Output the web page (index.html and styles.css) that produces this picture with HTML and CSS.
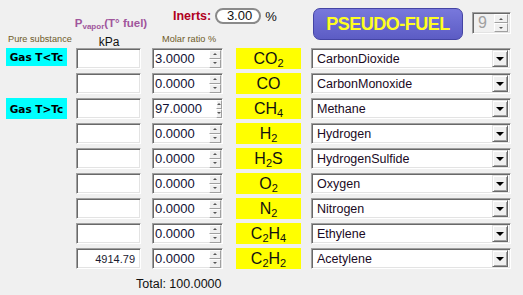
FILE: index.html
```html
<!DOCTYPE html>
<html>
<head>
<meta charset="utf-8">
<link rel="stylesheet" href="styles.css">
</head>
<body>
<div class="app">
  <div class="header">
    <div class="h-pure">Pure substance</div>
    <div class="h-pvap">
      <div class="pvap-title">P<span class="sub-v">vapor</span>(T° fuel)</div>
      <div class="kpa">kPa</div>
    </div>
    <div class="h-molar">
      <div class="inerts">
        <span class="inerts-label">Inerts:</span>
        <span class="pill">3.00</span>
        <span class="pct">%</span>
      </div>
      <div class="molar-label">Molar ratio %</div>
    </div>
    <div class="h-right">
      <div class="pseudo">PSEUDO-FUEL</div>
      <div class="spin9">
        <span class="spin9-val">9</span>
        <span class="spinner big"><span class="sb up"><i></i></span><span class="sb down"><i></i></span></span>
      </div>
    </div>
  </div>

  <div class="grid">
    <div class="lbl"><span class="cyan">Gas T&lt;Tc</span></div>
    <div class="box pv"></div>
    <div class="box molar"><span class="val">3.0000</span><span class="spinner"><span class="sb up"><i></i></span><span class="sb down"><i></i></span></span></div>
    <div class="formula">CO<sub>2</sub></div>
    <div class="box select"><span class="opt">CarbonDioxide</span><span class="dd"><i></i></span></div>

    <div class="lbl"></div>
    <div class="box pv"></div>
    <div class="box molar"><span class="val">0.0000</span><span class="spinner"><span class="sb up"><i></i></span><span class="sb down"><i></i></span></span></div>
    <div class="formula">CO</div>
    <div class="box select"><span class="opt">CarbonMonoxide</span><span class="dd"><i></i></span></div>

    <div class="lbl"><span class="cyan tall">Gas T&gt;Tc</span></div>
    <div class="box pv"></div>
    <div class="box molar"><span class="val">97.0000</span><span class="spinner"><span class="sb up"><i></i></span><span class="sb down"><i></i></span></span></div>
    <div class="formula">CH<sub>4</sub></div>
    <div class="box select"><span class="opt">Methane</span><span class="dd"><i></i></span></div>

    <div class="lbl"></div>
    <div class="box pv"></div>
    <div class="box molar"><span class="val">0.0000</span><span class="spinner"><span class="sb up"><i></i></span><span class="sb down"><i></i></span></span></div>
    <div class="formula">H<sub>2</sub></div>
    <div class="box select"><span class="opt">Hydrogen</span><span class="dd"><i></i></span></div>

    <div class="lbl"></div>
    <div class="box pv"></div>
    <div class="box molar"><span class="val">0.0000</span><span class="spinner"><span class="sb up"><i></i></span><span class="sb down"><i></i></span></span></div>
    <div class="formula">H<sub>2</sub>S</div>
    <div class="box select"><span class="opt">HydrogenSulfide</span><span class="dd"><i></i></span></div>

    <div class="lbl"></div>
    <div class="box pv"></div>
    <div class="box molar"><span class="val">0.0000</span><span class="spinner"><span class="sb up"><i></i></span><span class="sb down"><i></i></span></span></div>
    <div class="formula">O<sub>2</sub></div>
    <div class="box select"><span class="opt">Oxygen</span><span class="dd"><i></i></span></div>

    <div class="lbl"></div>
    <div class="box pv"></div>
    <div class="box molar"><span class="val">0.0000</span><span class="spinner"><span class="sb up"><i></i></span><span class="sb down"><i></i></span></span></div>
    <div class="formula">N<sub>2</sub></div>
    <div class="box select"><span class="opt">Nitrogen</span><span class="dd"><i></i></span></div>

    <div class="lbl"></div>
    <div class="box pv"></div>
    <div class="box molar"><span class="val">0.0000</span><span class="spinner"><span class="sb up"><i></i></span><span class="sb down"><i></i></span></span></div>
    <div class="formula">C<sub>2</sub>H<sub>4</sub></div>
    <div class="box select"><span class="opt">Ethylene</span><span class="dd"><i></i></span></div>

    <div class="lbl"></div>
    <div class="box pv"><span class="pvval">4914.79</span></div>
    <div class="box molar"><span class="val">0.0000</span><span class="spinner"><span class="sb up"><i></i></span><span class="sb down"><i></i></span></span></div>
    <div class="formula">C<sub>2</sub>H<sub>2</sub></div>
    <div class="box select"><span class="opt">Acetylene</span><span class="dd"><i></i></span></div>
  </div>

  <div class="total">Total: 100.0000</div>
</div>
</body>
</html>
```
FILE: styles.css
```css
html, body {
  margin: 0;
  padding: 0;
  background: #f0f0f0;
}
body {
  font-family: "Liberation Sans", Arial, sans-serif;
  color: #111;
  width: 523px;
  height: 295px;
  overflow: hidden;
}
.app {
  padding-left: 6px;
}

/* ---------- header ---------- */
.header {
  display: flex;
  height: 48px;
}
.h-pure {
  width: 70px;
  display: flex;
  flex-direction: column;
  justify-content: flex-end;
  padding-left: 2px;
  padding-bottom: 3px;
  box-sizing: border-box;
  font-size: 9.2px;
  line-height: 12px;
  color: #6e5a28;
  white-space: nowrap;
}
.h-pvap {
  width: 76px;
  display: flex;
  flex-direction: column;
  align-items: center;
  padding-top: 16px;
  box-sizing: border-box;
}
.pvap-title {
  font-size: 11.5px;
  font-weight: bold;
  line-height: 14px;
  color: #a0569c;
  white-space: nowrap;
  margin-right: 6px;
}
.sub-v {
  font-size: 8px;
  position: relative;
  top: 2px;
}
.kpa {
  font-size: 12px;
  line-height: 14px;
  margin-top: 3px;
  color: #111;
  margin-right: 10px;
}
.h-molar {
  width: 159px;
  display: flex;
  flex-direction: column;
  padding-top: 8px;
  box-sizing: border-box;
}
.inerts {
  display: flex;
  align-items: center;
  height: 16px;
  margin-left: 21px;
}
.inerts-label {
  font-size: 12.5px;
  font-weight: bold;
  color: #b0001e;
  margin-right: 4px;
}
.pill {
  width: 46px;
  height: 16px;
  box-sizing: border-box;
  border: 2px solid #8a8a8a;
  border-radius: 8px;
  background: #fff;
  font-size: 13px;
  line-height: 12px;
  text-align: right;
  padding-right: 7px;
  color: #111;
}
.pct {
  font-size: 13px;
  margin-left: 4px;
  color: #111;
}
.molar-label {
  margin-top: auto;
  margin-left: 10px;
  padding-bottom: 3px;
  font-size: 9.2px;
  line-height: 12px;
  color: #6e5a28;
  white-space: nowrap;
}
.h-right {
  display: flex;
  align-items: flex-start;
  padding-top: 8px;
  margin-left: 2px;
}
.pseudo {
  width: 150px;
  height: 32px;
  box-sizing: border-box;
  border: 1px solid #4444a4;
  border-radius: 7px;
  background: linear-gradient(#7878dc, #5c5cc4);
  color: #ffff20;
  font-weight: bold;
  font-size: 18px;
  letter-spacing: -0.5px;
  display: flex;
  align-items: center;
  justify-content: center;
}
.spin9 {
  margin-left: 9px;
  margin-top: 4px;
  width: 39px;
  height: 22px;
  box-sizing: border-box;
  border-top: 1px solid #a0a0a0;
  border-left: 1px solid #a0a0a0;
  border-right: 1px solid #fff;
  border-bottom: 1px solid #fff;
  box-shadow: inset 1px 1px 0 #696969, inset -1px -1px 0 #e3e3e3;
  background: #f0f0f0;
  display: flex;
  align-items: center;
  padding: 2px 2px 2px 5px;
}
.spin9-val {
  font-size: 16px;
  color: #a0a0a0;
  flex: 1;
}
.spinner {
  display: flex;
  flex-direction: column;
  width: 14px;
  height: 17px;
}
.spinner.big {
  height: 18px;
}
.sb {
  flex: 1;
  box-sizing: border-box;
  background: #f0f0f0;
  border-top: 1px solid #fff;
  border-left: 1px solid #fff;
  border-right: 1px solid #a0a0a0;
  border-bottom: 1px solid #a0a0a0;
  display: flex;
  align-items: center;
  justify-content: center;
}
.sb i {
  width: 0;
  height: 0;
  border-left: 2px solid transparent;
  border-right: 2px solid transparent;
}
.sb.up i {
  border-bottom: 2px solid #555;
}
.sb.down i {
  border-top: 2px solid #555;
}

/* ---------- grid ---------- */
.grid {
  display: grid;
  grid-template-columns: 70px 76px 84px 75px 200px;
  grid-auto-rows: 21px;
  row-gap: 4px;
}
.lbl {
  display: flex;
  align-items: flex-start;
}
.cyan {
  width: 61px;
  height: 18px;
  background: #00ffff;
  color: #000;
  font-family: "DejaVu Sans", sans-serif;
  font-weight: bold;
  font-size: 10.5px;
  display: flex;
  align-items: center;
  justify-content: center;
}
.cyan.tall {
  height: 21px;
}
.box {
  height: 21px;
  box-sizing: border-box;
  border-top: 1px solid #a0a0a0;
  border-left: 1px solid #a0a0a0;
  border-right: 1px solid #fff;
  border-bottom: 1px solid #fff;
  box-shadow: inset 1px 1px 0 #696969, inset -1px -1px 0 #e3e3e3;
  background: #fff;
}
.pv {
  width: 65px;
  display: flex;
  align-items: center;
  justify-content: flex-end;
  padding-right: 5px;
}
.pvval {
  font-size: 11px;
  color: #1a1a30;
}
.molar {
  width: 71px;
  display: flex;
  align-items: center;
  padding: 1px 1px 1px 2px;
}
.molar .val {
  flex: 1;
  text-align: right;
  font-size: 13px;
  padding-right: 14px;
  color: #101034;
}
.molar .spinner {
  width: 14px;
  height: 18px;
  margin-right: 0;
}
.formula {
  width: 65px;
  height: 21px;
  background: #ffff00;
  font-size: 16px;
  line-height: 21px;
  text-align: center;
  color: #111;
}
.formula sub {
  font-size: 11px;
  vertical-align: -3px;
  line-height: 0;
}
.select {
  width: 200px;
  display: flex;
  align-items: center;
  padding: 2px 2px 2px 5px;
}
.opt {
  flex: 1;
  font-size: 12.5px;
  color: #1a0a24;
}
.dd {
  width: 16px;
  height: 17px;
  box-sizing: border-box;
  background: #f0f0f0;
  border-top: 1px solid #e3e3e3;
  border-left: 1px solid #e3e3e3;
  border-right: 1px solid #696969;
  border-bottom: 1px solid #696969;
  box-shadow: inset 1px 1px 0 #fff, inset -1px -1px 0 #a0a0a0;
  display: flex;
  align-items: center;
  justify-content: center;
}
.dd i {
  width: 0;
  height: 0;
  border-left: 4px solid transparent;
  border-right: 4px solid transparent;
  border-top: 4px solid #000;
}

.total {
  margin-left: 130px;
  margin-top: 8px;
  font-size: 12.5px;
  color: #111;
}
```
